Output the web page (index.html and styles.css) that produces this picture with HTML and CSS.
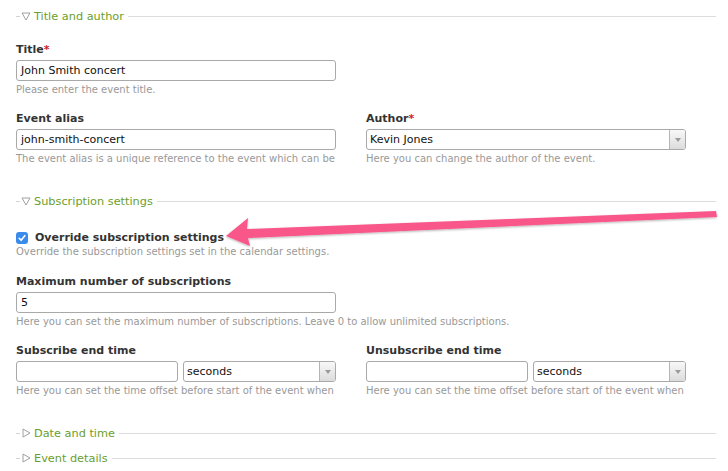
FILE: index.html
```html
<!DOCTYPE html>
<html>
<head>
<meta charset="utf-8">
<link rel="stylesheet" href="styles.css">
</head>
<body>
<div class="page">
  <div class="legend"><span class="dash"></span><svg class="tri" width="10" height="10" viewBox="0 0 10 10"><polygon points="1,2 9,2 5,9" fill="none" stroke="#a0a0a0" stroke-width="1" stroke-linejoin="round"/></svg><span class="ltext">Title and author</span><span class="rule"></span></div>
  <div class="grid g1">
    <div class="field">
      <div class="label">Title<span class="req">*</span></div>
      <div class="input">John Smith concert</div>
      <div class="help">Please enter the event title.</div>
    </div>
    <div></div>
    <div class="field">
      <div class="label">Event alias</div>
      <div class="input">john-smith-concert</div>
      <div class="help">The event alias is a unique reference to the event which can be</div>
    </div>
    <div class="field">
      <div class="label">Author<span class="req">*</span></div>
      <div class="select"><span class="sval">Kevin Jones</span><span class="sbtn"><i></i></span></div>
      <div class="help">Here you can change the author of the event.</div>
    </div>
  </div>

  <div class="legend sec"><span class="dash"></span><svg class="tri" width="10" height="10" viewBox="0 0 10 10"><polygon points="1,2 9,2 5,9" fill="none" stroke="#a0a0a0" stroke-width="1" stroke-linejoin="round"/></svg><span class="ltext">Subscription settings</span><span class="rule"></span></div>
  <div class="check-field">
    <div class="check-row">
      <span class="cbox"><svg width="12" height="12" viewBox="0 0 12 12"><path d="M3.2 6.3 L5.1 8.3 L8.8 3.7" fill="none" stroke="#fff" stroke-width="1.6" stroke-linecap="round" stroke-linejoin="round"/></svg></span>
      <span class="label inline">Override subscription settings</span>
    </div>
    <div class="help">Override the subscription settings set in the calendar settings.</div>
  </div>
  <div class="grid g2">
    <div class="field">
      <div class="label">Maximum number of subscriptions</div>
      <div class="input">5</div>
      <div class="help">Here you can set the maximum number of subscriptions. Leave 0 to allow unlimited subscriptions.</div>
    </div>
    <div></div>
    <div class="field">
      <div class="label">Subscribe end time</div>
      <div class="pair"><div class="input"></div><div class="select"><span class="sval">seconds</span><span class="sbtn"><i></i></span></div></div>
      <div class="help">Here you can set the time offset before start of the event when</div>
    </div>
    <div class="field">
      <div class="label">Unsubscribe end time</div>
      <div class="pair"><div class="input"></div><div class="select"><span class="sval">seconds</span><span class="sbtn"><i></i></span></div></div>
      <div class="help">Here you can set the time offset before start of the event when</div>
    </div>
  </div>

  <div class="legend closed first"><span class="dash"></span><svg class="tri" width="10" height="10" viewBox="0 0 10 10"><polygon points="2,1 2,9 9,5" fill="none" stroke="#a0a0a0" stroke-width="1" stroke-linejoin="round"/></svg><span class="ltext">Date and time</span><span class="rule"></span></div>
  <div class="legend closed second"><span class="dash"></span><svg class="tri" width="10" height="10" viewBox="0 0 10 10"><polygon points="2,1 2,9 9,5" fill="none" stroke="#a0a0a0" stroke-width="1" stroke-linejoin="round"/></svg><span class="ltext">Event details</span><span class="rule"></span></div>

  <svg class="arrow" width="728" height="471" viewBox="0 0 728 471">
    <defs>
      <filter id="sh" x="-5%" y="-50%" width="110%" height="200%">
        <feDropShadow dx="0" dy="1" stdDeviation="1.2" flood-color="#000" flood-opacity="0.3"/>
      </filter>
    </defs>
    <polygon points="226,236 248,218 247,229 716,211 717,217 248,238 250,246" fill="#f9568a" filter="url(#sh)"/>
  </svg>
</div>
</body>
</html>
```
FILE: styles.css
```css
html, body {
  margin: 0;
  padding: 0;
  background: #fff;
}
.page {
  position: relative;
  width: 728px;
  height: 471px;
  overflow: hidden;
  padding: 8px 12px 0 16px;
  box-sizing: border-box;
  font-family: "DejaVu Sans", Verdana, sans-serif;
  font-size: 11px;
  color: #333;
}
.legend {
  display: flex;
  align-items: center;
  height: 16px;
  color: #6b9e2c;
  font-size: 11.3px;
}
.legend .dash {
  width: 4px;
  height: 1px;
  background: #d4d4d4;
}
.legend .tri {
  margin-left: 1px;
  margin-right: 3px;
}
.legend .rule {
  flex: 1;
  height: 1px;
  background: #dcdcdc;
  margin-left: 4px;
}
.legend.sec {
  margin-top: 27px;
}
.legend.first {
  margin-top: 27px;
}
.legend.second {
  margin-top: 9px;
}
.grid {
  display: grid;
  grid-template-columns: 320px 320px;
  column-gap: 30px;
}
.g1 .field:first-child {
  margin-top: 19px;
}
.g2 .field:first-child {
  margin-top: 16px;
}
.grid .field:nth-child(n+3) {
  margin-top: 15px;
}
.g2 .field:nth-child(n+3) {
  margin-top: 15px;
}
.label {
  font-weight: bold;
  font-size: 11px;
  line-height: 14px;
  color: #333;
}
.req {
  color: #cc2230;
}
.input {
  margin-top: 3px;
  height: 21px;
  box-sizing: border-box;
  border: 1px solid #a9a9a9;
  border-radius: 3px;
  padding: 0 4px;
  line-height: 19px;
  font-size: 11px;
  color: #111;
  background: #fff;
}
.select {
  margin-top: 3px;
  display: flex;
  height: 21px;
  box-sizing: border-box;
  border: 1px solid #a9a9a9;
  border-radius: 3px;
  overflow: hidden;
  background: #fff;
}
.sval {
  flex: 1;
  padding: 0 3px;
  line-height: 19px;
  color: #111;
}
.sbtn {
  width: 15px;
  border-left: 1px solid #b5b5b5;
  background: linear-gradient(#f8f8f8, #dcdcdc);
  display: flex;
  align-items: center;
  justify-content: center;
}
.sbtn i {
  width: 0;
  height: 0;
  border-left: 3px solid transparent;
  border-right: 3px solid transparent;
  border-top: 4px solid #9a9a9a;
}
.pair {
  display: flex;
  gap: 5px;
}
.pair .input {
  width: 162px;
  flex: none;
}
.pair .select {
  flex: 1;
}
.help {
  margin-top: 2px;
  font-size: 10px;
  line-height: 14px;
  color: #999;
  white-space: nowrap;
}
.check-field {
  margin-top: 21px;
}
.check-row {
  display: flex;
  align-items: center;
  height: 15px;
}
.cbox {
  width: 12px;
  height: 12px;
  border-radius: 3px;
  background: #3a8bec;
  display: flex;
  margin-right: 7px;
}
.check-field .help {
  margin-top: 0;
}
.arrow {
  position: absolute;
  left: 0;
  top: 0;
  pointer-events: none;
}
```
